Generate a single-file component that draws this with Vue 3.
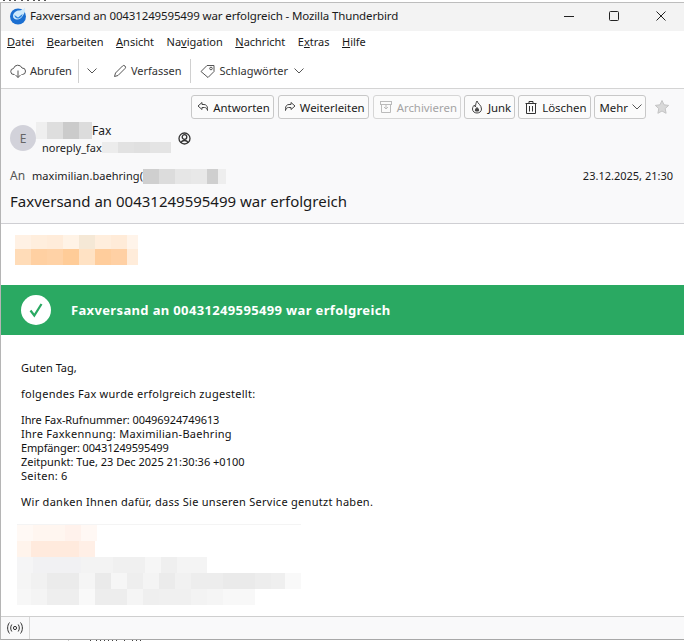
<template>
  <div class="page">
    <svg class="strip" width="684" height="2">
      <rect v-for="x in topTicks" :key="x" :x="x" y="0" width="2" height="1" fill="#555" />
    </svg>
    <div class="window">
      <div class="titlebar">
        <svg class="app-logo" width="18" height="18" viewBox="0 0 18 18">
          <circle cx="9" cy="9.500" r="8" fill="#1b6fd1" />
          <path d="M4 9c0-3 3-5.500 6-5.500 2 0 4.500-1 6-3 .5 3-.5 6-2 8-1.500 2.500-3.500 4-6 4-2.500 0-4-1.500-4-3.500z" fill="#cfeafc" />
          <path d="M5.500 8l3.500 2.500 4.500-3.500c0 2-2 4.500-4.500 4.500-2 0-3.500-1.500-3.500-3.500z" fill="#2b82dc" />
        </svg>
        <span class="title-text">Faxversand an 00431249595499 war erfolgreich - Mozilla Thunderbird</span>
        <div class="win-controls">
          <svg width="12" height="12" viewBox="0 0 12 12"><path d="M1 6.500h10" stroke="#222" fill="none" /></svg>
          <svg width="12" height="12" viewBox="0 0 12 12"><rect x="1.500" y="1.500" width="9" height="9" rx="1" stroke="#222" fill="none" /></svg>
          <svg width="12" height="12" viewBox="0 0 12 12"><path d="M1.500 1.500l9 9M10.500 1.500l-9 9" stroke="#222" fill="none" /></svg>
        </div>
      </div>

      <div class="menubar">
        <span><u>D</u>atei</span>
        <span><u>B</u>earbeiten</span>
        <span><u>A</u>nsicht</span>
        <span>Na<u>v</u>igation</span>
        <span><u>N</u>achricht</span>
        <span>E<u>x</u>tras</span>
        <span><u>H</u>ilfe</span>
      </div>

      <div class="toolbar">
        <div class="tool">
          <svg width="16" height="16" viewBox="0 0 16 16" fill="none" stroke="#555">
            <path d="M4.500 11.500h-.5a3 3 0 0 1-.5-6 4.500 4.500 0 0 1 8.500-.5 3.200 3.200 0 0 1 .5 6.500h-1" />
            <path d="M8 7.500v7M5.500 12l2.500 2.500 2.500-2.500" />
          </svg>
          <span>Abrufen</span>
        </div>
        <div class="tool-sep"></div>
        <svg class="chev tool-chev" width="10" height="6" viewBox="0 0 10 6"><path d="M.5.500l4.500 4.500 4.500-4.500" stroke="#555" fill="none" /></svg>
        <div class="tool tool-compose">
          <svg width="14" height="14" viewBox="0 0 14 14" fill="none" stroke="#555">
            <path d="M1.500 12.500l1-3.500 7-7a1.400 1.400 0 0 1 2.500 2.500l-7 7z" />
          </svg>
          <span>Verfassen</span>
        </div>
        <div class="tool-sep sep-compose"></div>
        <div class="tool tool-tags">
          <svg width="16" height="14" viewBox="0 0 16 14" fill="none" stroke="#555">
            <path d="M1 7.500l6-6h7v6l-6 6z" />
            <circle cx="11" cy="4.500" r="1.300" />
          </svg>
          <span>Schlagwörter</span>
          <svg class="chev tag-chev" width="10" height="6" viewBox="0 0 10 6"><path d="M.5.500l4.500 4.500 4.500-4.500" stroke="#555" fill="none" /></svg>
        </div>
      </div>

      <div class="msg-header">
        <div class="actions">
          <div class="btn btn-wide">
            <svg width="12" height="12" viewBox="0 0 12 12" fill="none" stroke="#444"><path d="M5 1.500L1 5l4 3.500V6.500h2.500c1.500 0 2.500 1 3 3V7.500C10.500 5 9 3.500 7 3.500H5z" /></svg>
            <span>Antworten</span>
          </div>
          <div class="btn btn-wide">
            <svg width="12" height="12" viewBox="0 0 12 12" fill="none" stroke="#444"><path d="M7 1.500L11 5 7 8.500V6.500H4.500c-1.500 0-2.500 1-3 3V7.500C1.500 5 3 3.500 5 3.500h2z" /></svg>
            <span>Weiterleiten</span>
          </div>
          <div class="btn disabled">
            <svg width="14" height="14" viewBox="0 0 14 14" fill="none" stroke="#bbb"><rect x="1.500" y="1.500" width="11" height="3" /><path d="M2.500 4.500v8h9v-8M5 7l2 2 2-2M7 4.500v4" /></svg>
            <span>Archivieren</span>
          </div>
          <div class="btn">
            <svg width="14" height="14" viewBox="0 0 14 14" fill="none" stroke="#444"><path d="M7 1c.5 2.500 4.500 4 4.500 8 0 2.500-2 4-4.500 4s-4.500-1.500-4.500-4c0-2 1-3 2-4 0 1 .5 1.500 1 2C5.500 5 6 2.500 7 1z" /><path d="M7 7.500c1 1 2 2 1.500 3.500H5.500C5 9.500 6 8.500 7 7.500z" fill="#444" /></svg>
            <span>Junk</span>
          </div>
          <div class="btn">
            <svg width="14" height="15" viewBox="0 0 14 15" fill="none" stroke="#333"><path d="M1.500 3.500h11M5 3.500V1.500h4v2M2.500 3.500v10h9v-10M5.500 6v5.500M8.500 6v5.500" /></svg>
            <span>Löschen</span>
          </div>
          <div class="btn">
            <span>Mehr</span>
            <svg class="chev" width="10" height="6" viewBox="0 0 10 6"><path d="M.5.500l4.500 4.500 4.500-4.500" stroke="#555" fill="none" /></svg>
          </div>
          <svg class="star" width="16" height="16" viewBox="0 0 16 16"><path d="M8 1.500l2 4.300 4.700.6-3.500 3.200.9 4.700L8 12l-4.100 2.300.9-4.700L1.300 6.400 6 5.800z" fill="#d9d9d9" stroke="#c4c4c4" /></svg>
        </div>

        <div class="sender-row">
          <div class="avatar">E</div>
          <div class="sender">
            <div class="sender-name">
              <svg class="blur" width="56" height="17"><rect v-for="(b, i) in nameBlocks" :key="i" :x="b[0]" y="0" :width="b[1]" height="17" :fill="b[2]" /></svg>
              <span>Fax</span>
            </div>
            <div class="sender-mail">
              <span>noreply_fax</span>
              <svg class="blur" width="69" height="11"><rect v-for="(b, i) in mailBlocks" :key="i" :x="b[0]" y="0" :width="b[1]" height="11" :fill="b[2]" /></svg>
            </div>
          </div>
          <svg class="contact-icon" width="13" height="13" viewBox="0 0 13 13" fill="none" stroke="#333" stroke-width="1.300">
            <circle cx="6.500" cy="6.500" r="5.500" />
            <circle cx="6.500" cy="5" r="2.300" />
            <path d="M3 11c.5-2 2-2.500 3.500-2.500S9.500 9 10 11" />
          </svg>
        </div>

        <div class="to-row">
          <span class="to-label">An</span>
          <span class="to-addr">maximilian.baehring(</span>
          <svg class="blur" width="83" height="15"><rect v-for="(b, i) in toBlocks" :key="i" :x="b[0]" y="0" :width="b[1]" height="15" :fill="b[2]" /></svg>
          <span class="to-date">23.12.2025, 21:30</span>
        </div>

        <div class="subject">Faxversand an 00431249595499 war erfolgreich</div>
      </div>

      <div class="msg-body">
        <svg class="logo-blur" width="123" height="30">
          <rect v-for="(b, i) in logoBlocks" :key="i" :x="b[0]" :y="b[1]" :width="b[2]" :height="b[3]" :fill="b[4]" />
        </svg>

        <div class="banner">
          <div class="check">
            <svg width="16" height="16" viewBox="0 0 16 16"><path d="M2.500 8.500l3.800 5L13.500 2" stroke="#2aa962" stroke-width="2.200" fill="none" /></svg>
          </div>
          <span>Faxversand an 00431249595499 war erfolgreich</span>
        </div>

        <div class="mail-text">
          <p>Guten Tag,</p>
          <p class="wide">folgendes Fax wurde erfolgreich zugestellt:</p>
          <p>
            <span class="tight">Ihre Fax-Rufnummer: 00496924749613</span><br />
            <span class="wide">Ihre Faxkennung: Maximilian-Baehring</span><br />
            <span class="tighter">Empfänger: 00431249595499</span><br />
            Zeitpunkt: Tue, 23 Dec 2025 21:30:36 +0100<br />
            <span class="wide">Seiten: 6</span>
          </p>
          <p class="wide">Wir danken Ihnen dafür, dass Sie unseren Service genutzt haben.</p>
        </div>

        <svg class="footer-blur" width="284" height="81">
          <rect v-for="(b, i) in footerBlocks" :key="i" :x="b[0]" :y="b[1]" :width="b[2]" :height="b[3]" :fill="b[4]" />
        </svg>
      </div>

      <div class="statusbar">
        <div class="status-cell">
          <svg width="16" height="14" viewBox="0 0 16 14" fill="none" stroke="#333">
            <circle cx="8" cy="7" r="1.600" />
            <path d="M4.800 3.500c-1.500 2-1.500 5 0 7M11.200 3.500c1.500 2 1.500 5 0 7M2.500 1.500c-2.500 3-2.500 8 0 11M13.500 1.500c2.500 3 2.500 8 0 11" />
          </svg>
        </div>
      </div>
    </div>
    <svg class="strip" width="684" height="1">
      <rect x="68" y="0" width="1" height="1" fill="#ccc" />
      <rect v-for="x in bottomTicks" :key="x" :x="x" y="0" width="1" height="1" fill="#444" />
    </svg>
  </div>
</template>

<script setup>
const topTicks = [3, 9, 14, 21, 27, 33, 38, 44]
const bottomTicks = [90, 96, 100, 104, 108, 112, 116, 124, 132, 136, 140]

const nameBlocks = [
  [0, 11, '#efefef'], [11, 16, '#dedede'], [27, 16, '#cbcbcb'], [43, 13, '#dcdcdc'],
]
const mailBlocks = [
  [0, 16, '#ececec'], [16, 16, '#e2e2e2'], [32, 16, '#e0e0e0'], [48, 21, '#e4e4e4'],
]
const toBlocks = [
  [0, 16, '#cfcfcf'], [16, 16, '#dcdcdc'], [32, 16, '#e6e6e6'], [48, 16, '#e8e8e8'], [64, 11, '#cfcfcf'], [75, 8, '#eeeeee'],
]
const logoBlocks = [
  [0, 0, 16, 14, '#fff1e4'], [16, 0, 16, 14, '#ffeedd'], [32, 0, 16, 14, '#ffecda'], [48, 0, 16, 14, '#fff3e6'],
  [64, 0, 16, 14, '#f5e8d6'], [80, 0, 16, 14, '#ffeedd'], [96, 0, 16, 14, '#ffebd8'], [112, 0, 11, 14, '#fff4ea'],
  [0, 14, 16, 16, '#ffdcb8'], [16, 14, 16, 16, '#ffd0a2'], [32, 14, 16, 16, '#ffd2a6'], [48, 14, 16, 16, '#ffcc98'],
  [64, 14, 16, 16, '#ffe2c4'], [80, 14, 16, 16, '#ffcd9c'], [96, 14, 16, 16, '#ffd0a4'], [112, 14, 11, 16, '#ffecda'],
]
const footerBlocks = [
  [0, 0, 284, 1, '#f4f4f4'],
  [0, 1, 16, 16, '#fff9f5'], [16, 1, 32, 16, '#fff6f0'], [48, 1, 16, 16, '#fff2ec'], [64, 1, 16, 16, '#fff8f4'],
  [0, 17, 14, 16, '#fff4ec'], [14, 17, 48, 16, '#ffeadd'], [62, 17, 16, 16, '#ffefe6'],
  [0, 33, 16, 16, '#f5f5f6'], [16, 33, 48, 16, '#f1f1f3'], [64, 33, 32, 16, '#f3f3f3'], [96, 33, 32, 16, '#f0f0f0'], [128, 33, 16, 16, '#f6f6f6'], [144, 33, 16, 16, '#efefef'], [160, 33, 30, 16, '#f4f4f4'],
  [0, 49, 14, 16, '#f5f5f5'], [14, 49, 16, 16, '#f1f1f1'], [30, 49, 32, 16, '#ebebeb'], [62, 49, 16, 16, '#f5f5f5'], [78, 49, 16, 16, '#eaeaea'], [94, 49, 16, 16, '#f6f6f6'], [110, 49, 16, 16, '#eeeeee'], [126, 49, 16, 16, '#f4f4f4'], [142, 49, 16, 16, '#ebebeb'], [158, 49, 16, 16, '#f1f1f1'], [174, 49, 32, 16, '#ededed'], [206, 49, 32, 16, '#eaeaea'], [238, 49, 16, 16, '#ededed'], [254, 49, 14, 16, '#efefef'], [268, 49, 16, 16, '#f9f9f9'],
  [0, 65, 14, 16, '#f7f7f7'], [14, 65, 16, 16, '#f4f4f4'], [30, 65, 32, 16, '#eeeeee'], [62, 65, 16, 16, '#f9f9f9'], [78, 65, 32, 16, '#ededed'], [110, 65, 16, 16, '#f5f5f5'], [126, 65, 16, 16, '#efefef'], [142, 65, 32, 16, '#f0f0f0'], [174, 65, 16, 16, '#f3f3f3'], [190, 65, 16, 16, '#f5f5f5'], [206, 65, 32, 16, '#f8f8f8'],
]
</script>

<style>
html, body {
  margin: 0;
  background: #fff;
}
</style>

<style scoped>
* {
  box-sizing: border-box;
}

.page {
  width: 684px;
  height: 641px;
  overflow: hidden;
  display: flex;
  flex-direction: column;
  font-family: "Noto Sans", sans-serif;
  color: #1a1a1a;
}

.strip {
  display: block;
  flex: none;
}

.window {
  height: 638px;
  flex: none;
  display: flex;
  flex-direction: column;
  border-top: 1px solid #bdbdbd;
  border-left: 1px solid #b5b5b5;
  border-bottom: 1px solid #a8a8a8;
}

/* Title bar */
.titlebar {
  height: 28px;
  flex: none;
  display: flex;
  align-items: center;
  background: #f3f3f3;
  padding: 0 0 3px 8px;
  font-size: 11.500px;
}

.title-text {
  margin-left: 3px;
  flex: 1;
  letter-spacing: -0.13px;
}

.win-controls {
  display: flex;
  gap: 33px;
  padding-right: 17px;
}

.win-controls svg:nth-child(2) {
  margin-right: 2px;
}

/* Menu */
.menubar {
  height: 25px;
  flex: none;
  display: flex;
  align-items: center;
  gap: 12.500px;
  padding: 0 0 5px 6px;
  font-size: 11px;
  background: #fff;
}

/* Toolbar */
.toolbar {
  height: 33px;
  flex: none;
  display: flex;
  align-items: center;
  padding: 0 0 3px 9px;
  font-size: 11px;
  background: #fff;
  border-bottom: 1px solid #d4d4d4;
  color: #333;
}

.tool {
  display: flex;
  align-items: center;
  gap: 4px;
}

.tool-sep {
  width: 1px;
  height: 24px;
  background: #d0d0d0;
  margin-left: 6px;
}

.sep-compose {
  margin-left: 8px;
}

.tool-chev {
  margin-left: 8px;
}

.tool-compose {
  margin-left: 16px;
}

.tool-tags {
  margin-left: 9px;
}

.tag-chev {
  margin-left: 2px;
}

.chev {
  flex: none;
}

/* Message header */
.msg-header {
  height: 135px;
  flex: none;
  background: #f9f9fa;
  border-bottom: 1px solid #cfcfd3;
  padding-top: 6px;
}

.actions {
  display: flex;
  justify-content: flex-end;
  align-items: center;
  gap: 3px;
  padding-right: 14px;
}

.btn {
  height: 24px;
  display: flex;
  align-items: center;
  gap: 4px;
  padding: 0 3px 0 5px;
  font-size: 11.400px;
  background: #fbfbfb;
  border: 1px solid #c8c8c8;
  border-radius: 3px;
}

.btn-wide {
  margin-right: 1px;
}

.btn.disabled {
  color: #a4a4a4;
  border-color: #d6d6d6;
}

.star {
  margin-left: 5px;
}

.sender-row {
  display: flex;
  align-items: center;
  margin-top: 1px;
  padding-left: 9px;
}

.avatar {
  width: 26px;
  height: 26px;
  flex: none;
  border-radius: 50%;
  background: #d2d2da;
  color: #666;
  font-size: 12px;
  display: flex;
  align-items: center;
  justify-content: center;
}

.sender {
  width: 141px;
}

.blur {
  display: block;
  flex: none;
}

.sender-name {
  display: flex;
  align-items: flex-end;
  font-size: 12px;
  height: 19px;
  line-height: 16px;
}

.sender-mail {
  display: flex;
  align-items: center;
  font-size: 11px;
  height: 17px;
  padding-left: 6px;
}

.contact-icon {
  margin-left: 1px;
}

.to-row {
  display: flex;
  align-items: flex-start;
  height: 15px;
  margin-top: 13px;
  padding: 0 11px 0 9px;
  font-size: 11px;
  line-height: 13px;
}

.to-label {
  color: #555;
  width: 22px;
  font-size: 12px;
}

.to-addr {
  letter-spacing: 0.05px;
}

.to-date {
  margin-left: auto;
}

.subject {
  margin-top: 7px;
  padding-left: 9px;
  font-size: 15px;
  line-height: 20px;
}

/* Message body */
.msg-body {
  flex: 1;
  background: #fff;
  padding-top: 11px;
  display: flex;
  flex-direction: column;
  min-height: 0;
}

.logo-blur {
  display: block;
  margin-left: 14px;
  flex: none;
}

.banner {
  height: 50px;
  flex: none;
  margin-top: 20px;
  background: #2aa962;
  display: flex;
  align-items: center;
  gap: 20px;
  padding-left: 20px;
  color: #fff;
  font-size: 13px;
  font-weight: 700;
  letter-spacing: 0.35px;
}

.check {
  width: 30px;
  height: 30px;
  border-radius: 50%;
  background: #fff;
  display: flex;
  align-items: center;
  justify-content: center;
}

.mail-text {
  padding: 26px 0 0 20px;
  font-size: 11px;
  line-height: 14px;
  color: #111;
}

.mail-text p {
  margin: 0 0 12px;
}

.wide {
  letter-spacing: 0.28px;
}

.tight {
  letter-spacing: -0.09px;
}

.tighter {
  letter-spacing: -0.15px;
}

.footer-blur {
  display: block;
  margin: 3px 0 0 16px;
  flex: none;
}

/* Status bar */
.statusbar {
  height: 23px;
  flex: none;
  background: #f9f9fa;
  border-top: 1px solid #cfcfcf;
  display: flex;
}

.status-cell {
  width: 29px;
  display: flex;
  align-items: center;
  justify-content: center;
  border-right: 1px solid #d8d8d8;
}
</style>
